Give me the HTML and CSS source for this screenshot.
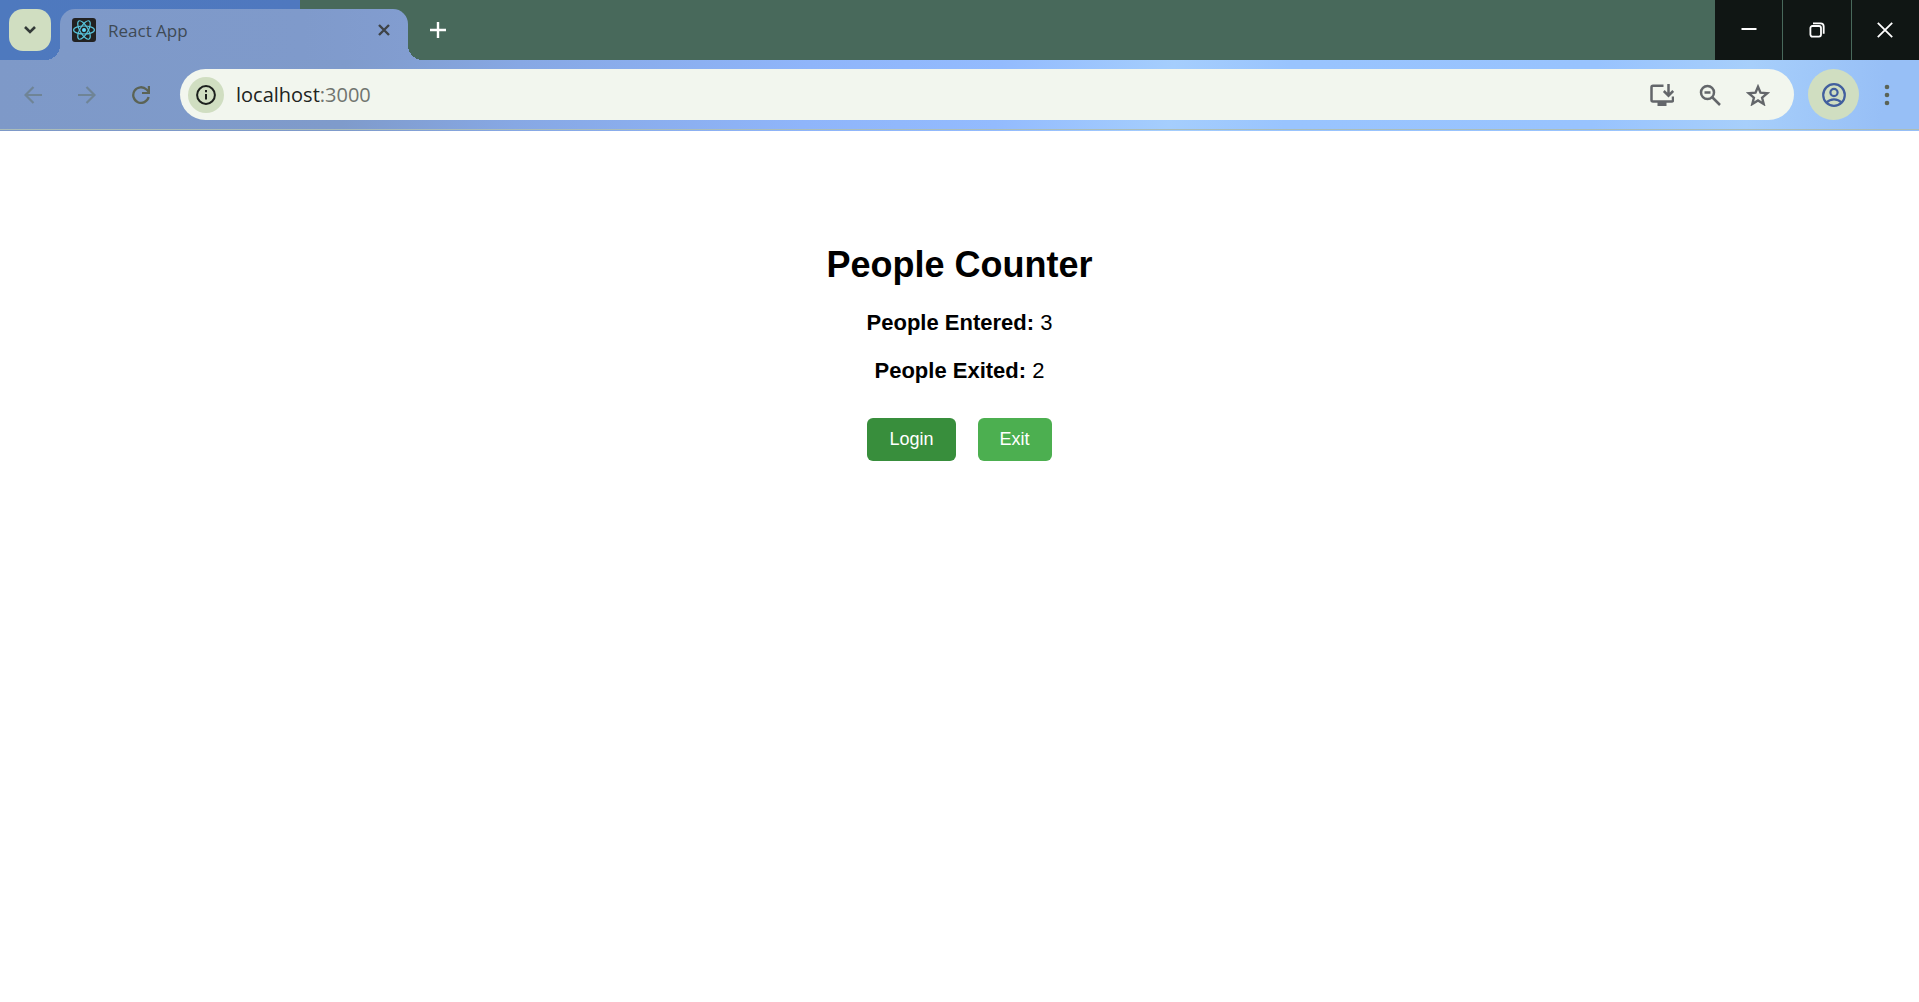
FILE: index.html
```html
<!DOCTYPE html>
<html lang="en">
<head>
<meta charset="utf-8">
<meta name="viewport" content="width=device-width, initial-scale=1">
<title>React App</title>
<link rel="stylesheet" href="styles.css">
</head>
<body>
<header class="browser">
  <div class="tab-strip">
    <button class="tab-search" type="button" aria-label="Search tabs">
      <svg width="14" height="10" viewBox="0 0 14 10"><path d="M2 2l5 5 5-5" fill="none" stroke="currentColor" stroke-width="2.6"/></svg>
    </button>
    <div class="tab">
      <svg class="favicon" width="24" height="24" viewBox="0 0 24 24">
        <rect width="24" height="24" rx="3" fill="#222"/>
        <g fill="none" stroke="#58c4dc" stroke-width="1.2">
          <ellipse cx="12" cy="12" rx="10.4" ry="4"/>
          <ellipse cx="12" cy="12" rx="10.4" ry="4" transform="rotate(60 12 12)"/>
          <ellipse cx="12" cy="12" rx="10.4" ry="4" transform="rotate(120 12 12)"/>
        </g>
        <circle cx="12" cy="12" r="2" fill="#61dafb"/>
      </svg>
      <span class="tab-title">React App</span>
      <button class="tab-close" type="button" aria-label="Close tab">
        <svg width="12" height="12" viewBox="0 0 12 12"><path d="M1 1l10 10M11 1L1 11" stroke="currentColor" stroke-width="2.4"/></svg>
      </button>
    </div>
    <button class="new-tab" type="button" aria-label="New tab">
      <svg width="16" height="16" viewBox="0 0 16 16"><path d="M8 0v16M0 8h16" stroke="currentColor" stroke-width="2.4"/></svg>
    </button>
    <div class="window-controls">
      <button type="button" aria-label="Minimize"><svg width="16" height="16" viewBox="0 0 16 16"><path d="M.5 7h15" stroke="currentColor" stroke-width="2"/></svg></button>
      <button type="button" aria-label="Restore"><svg width="16" height="16" viewBox="0 0 16 16" fill="none" stroke="currentColor" stroke-width="1.8"><rect x="1.4" y="4" width="10.6" height="10.6" rx="2"/><path d="M4 1.4h7.5a3.2 3.2 0 0 1 3.2 3.2v7.2"/></svg></button>
      <button type="button" aria-label="Close"><svg width="16" height="16" viewBox="0 0 16 16"><path d="M.8.8l14.4 14.4M15.2.8L.8 15.2" stroke="currentColor" stroke-width="1.8"/></svg></button>
    </div>
  </div>
  <div class="toolbar">
    <nav class="nav-buttons" aria-label="History">
      <button class="tool faded" type="button" aria-label="Back"><svg width="18" height="18" viewBox="0 0 18 18"><path d="M9.500 1L1.500 9l8 8M1.500 9H18" fill="none" stroke="currentColor" stroke-width="2.200"/></svg></button>
      <button class="tool faded" type="button" aria-label="Forward"><svg width="18" height="18" viewBox="0 0 18 18"><path d="M8.500 1l8 8-8 8M16.500 9H0" fill="none" stroke="currentColor" stroke-width="2.200"/></svg></button>
      <button class="tool" type="button" aria-label="Reload"><svg width="18" height="18" viewBox="0 0 18 18"><path d="M16.600 11A7.800 7.800 0 1 1 14.500 3.500L16.500 5.500" fill="none" stroke="currentColor" stroke-width="2.300"/><path d="M18 0v8h-8V6h5.800V0z" fill="currentColor"/></svg></button>
    </nav>
    <div class="omnibox">
      <button class="site-info" type="button" aria-label="Site information"><svg width="20" height="20" viewBox="0 0 20 20"><circle cx="10" cy="10" r="8.900" fill="none" stroke="currentColor" stroke-width="2"/><path d="M10 9v5.500M10 5v2.200" stroke="currentColor" stroke-width="2"/></svg></button>
      <div class="url">localhost<span class="port">:3000</span></div>
      <div class="omnibox-actions">
        <button type="button" aria-label="Install app"><svg width="24" height="22" viewBox="0 0 24 22"><path d="M13.500 1.800H3Q1.500 1.800 1.500 3.300v12.700q0 1.500 1.500 1.500h18.500q1.500 0 1.500-1.500V12.500M18.500 0v11M13.800 7l4.700 4.700L23.200 7" fill="none" stroke="currentColor" stroke-width="2.500"/><path d="M7.500 17.500h9V22h-9z" fill="currentColor"/></svg></button>
        <button type="button" aria-label="Zoom"><svg width="22" height="22" viewBox="0 0 22 22" fill="none" stroke="currentColor" stroke-width="2.500"><circle cx="8.500" cy="8.500" r="6.500"/><path d="M5.500 8.500h6M13 13L21 21"/></svg></button>
        <button type="button" aria-label="Bookmark this tab"><svg width="24" height="22" viewBox="0 0 24 22"><path d="M12 2.800l2.500 5.900 6.800.600-5.200 4.400 1.600 6.300-5.700-3.500-5.700 3.500 1.600-6.300-5.200-4.400 6.800-.600z" fill="none" stroke="currentColor" stroke-width="2.400"/></svg></button>
      </div>
    </div>
    <button class="profile" type="button" aria-label="Profile"><svg width="24" height="24" viewBox="0 0 24 24" fill="none" stroke="currentColor" stroke-width="2.200"><circle cx="12" cy="12" r="10.800"/><circle cx="12" cy="9.500" r="3.600"/><path d="M4.500 19.500c4-4.300 11-4.300 15 0"/></svg></button>
    <button class="menu" type="button" aria-label="Menu"><svg width="6" height="22" viewBox="0 0 6 22" fill="currentColor"><circle cx="3" cy="3" r="2.300"/><circle cx="3" cy="11" r="2.300"/><circle cx="3" cy="19" r="2.300"/></svg></button>
  </div>
</header>
<main class="counter">
  <h1>People Counter</h1>
  <p><strong>People Entered:</strong> 3</p>
  <p><strong>People Exited:</strong> 2</p>
  <div class="actions">
    <button class="action active" type="button">Login</button>
    <button class="action" type="button">Exit</button>
  </div>
</main>
</body>
</html>
```
FILE: styles.css
```css
* { box-sizing: border-box; }

body {
  margin: 0;
  background: #fff;
  color: #000;
  font-family: "Liberation Sans", Arial, sans-serif;
}

button {
  display: flex;
  align-items: center;
  justify-content: center;
  flex: none;
  margin: 0;
  padding: 0;
  border: 0;
  background: none;
  color: inherit;
  font: inherit;
  cursor: pointer;
}

.browser { font-family: "Open Sans", "Noto Sans", sans-serif; }

.tab-strip {
  display: flex;
  height: 60px;
  padding-left: 9px;
  background: linear-gradient(90deg, #4e79be, #4f78bf) no-repeat left / 300px 100% #48695b;
}

.tab-search {
  width: 42px;
  height: 42px;
  margin: 9px 9px 0 0;
  border-radius: 14px;
  background: #d0dec1;
  color: #333a38;
}

.tab {
  position: relative;
  display: flex;
  align-items: center;
  width: 348px;
  margin-top: 9px;
  padding: 0 18px 9px 12px;
  border-radius: 15px 15px 0 0;
  background: linear-gradient(90deg, #7e99c8, #7f9acb 70%, #829dd0);
  color: #3e4a55;
}

.tab::before,
.tab::after {
  content: "";
  position: absolute;
  bottom: 0;
  width: 15px;
  height: 15px;
}

.tab::before {
  right: 100%;
  background: radial-gradient(circle at 0 0, transparent 15px, #7e99c8 15px);
}

.tab::after {
  left: 100%;
  background: radial-gradient(circle at 100% 0, transparent 15px, #829dd0 15px);
}

.tab-title {
  flex: 1;
  margin-left: 12px;
  padding-top: 2px;
  font-size: 17px;
  line-height: 24px;
}

.tab-close { color: #3e4347; }

.new-tab {
  width: 60px;
  color: #fff;
}

.window-controls {
  display: flex;
  gap: 1px;
  width: 204px;
  margin-left: auto;
}

.window-controls button {
  flex: 1;
  background: #101614;
  color: #fff;
}

.toolbar {
  display: flex;
  align-items: center;
  height: 71px;
  padding: 0 22px 2px 15px;
  background:
    linear-gradient(#abbdb8, #abbdb8) no-repeat 0 69px / 100% 1px,
    linear-gradient(95deg, #7e99c8 0%, #7f9bcb 18%, #87a8e4 27%, #8fb5fa 42%, #93bbfe 52%, #a5cefd 61%, #99c4fe 67%, #98c3fe 83%, #a7cffb 91%, #97bff6 98%);
  color: #5b6355;
}

.nav-buttons {
  display: flex;
  gap: 18px;
}

.tool {
  width: 36px;
  height: 36px;
}

.faded { color: #6f8496; }

.omnibox {
  display: flex;
  align-items: center;
  flex: 1;
  height: 51px;
  margin-left: 21px;
  padding: 0 24px 0 8px;
  border-radius: 26px;
  background: #f2f6ee;
}

.site-info {
  width: 36px;
  height: 36px;
  border-radius: 50%;
  background: #d0dec1;
  color: #1c201d;
}

.url {
  flex: 1;
  margin-left: 12px;
  color: #202320;
  font-size: 20px;
  line-height: 28px;
}

.port { color: #70746f; }

.omnibox-actions {
  display: flex;
  gap: 25px;
  color: #63666a;
}

.profile {
  width: 51px;
  height: 51px;
  margin-left: 14px;
  border-radius: 50%;
  background: #d0dec1;
  color: #425f9e;
}

.menu {
  width: 20px;
  height: 36px;
  margin-left: 18px;
}

.counter {
  padding: 113px 20px 40px;
  text-align: center;
}

.counter h1 {
  margin: 0;
  font-size: 36px;
  line-height: 42px;
}

.counter p {
  margin: 22px 0;
  font-size: 22px;
  line-height: 26px;
}

.counter h1 + p { margin-top: 24px; }

.actions {
  display: flex;
  justify-content: center;
  gap: 22px;
  margin-top: 34px;
}

.action {
  height: 43px;
  padding: 0 22px;
  border-radius: 6px;
  background: #4caf50;
  color: #fff;
  font-size: 18px;
}

.action.active { background: #388e3c; }
```
